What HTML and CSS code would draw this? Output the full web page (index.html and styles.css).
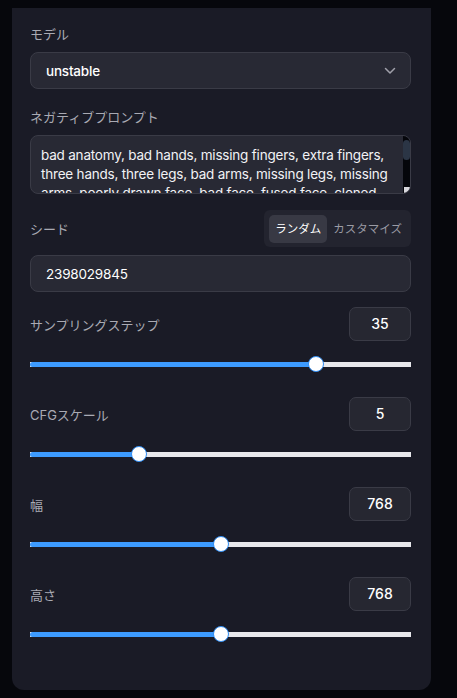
FILE: index.html
```html
<!DOCTYPE html>
<html>
<head>
    <title>生成設定</title>
<link rel="stylesheet" href="styles.css">
</head>
<body>
    <div class="panel">
        <div class="field">
            <label class="label">モデル</label>
            <div class="select">
                <span>unstable</span>
                <svg class="chevron" width="12" height="8" viewBox="0 0 12 8"><path d="M1.5 1.5 6 6l4.5-4.5" fill="none" stroke="#a0a0aa" stroke-width="1.5" stroke-linecap="round" stroke-linejoin="round"/></svg>
            </div>
        </div>

        <div class="field prompt">
            <label class="label">ネガティブプロンプト</label>
            <div class="textarea">
                <div class="textarea-text">bad anatomy, bad hands, missing fingers, extra fingers, three hands, three legs, bad arms, missing legs, missing arms, poorly drawn face, bad face, fused face, cloned face</div>
                <div class="scrollbar"><div class="scroll-thumb"></div></div>
                <div class="resize"></div>
            </div>
        </div>

        <div class="field seed">
            <div class="row">
                <label class="label">シード</label>
                <div class="toggle">
                    <span class="toggle-item active">ランダム</span>
                    <span class="toggle-item">カスタマイズ</span>
                </div>
            </div>
            <div class="input">2398029845</div>
        </div>

        <div class="slider-field">
            <div class="row">
                <label class="label">サンプリングステップ</label>
                <div class="number">35</div>
            </div>
            <div class="slider" style="--p: 75.1%"><div class="fill"></div><div class="thumb"></div></div>
        </div>

        <div class="slider-field">
            <div class="row">
                <label class="label">CFGスケール</label>
                <div class="number">5</div>
            </div>
            <div class="slider" style="--p: 28.6%"><div class="fill"></div><div class="thumb"></div></div>
        </div>

        <div class="slider-field">
            <div class="row">
                <label class="label">幅</label>
                <div class="number">768</div>
            </div>
            <div class="slider" style="--p: 50.1%"><div class="fill"></div><div class="thumb"></div></div>
        </div>

        <div class="slider-field">
            <div class="row">
                <label class="label">高さ</label>
                <div class="number">768</div>
            </div>
            <div class="slider" style="--p: 50.1%"><div class="fill"></div><div class="thumb"></div></div>
        </div>
    </div>
</body>
</html>
```

FILE: styles.css
```css
body {
    margin: 0;
    background-color: #06070c;
    font-family: "Inter", "Noto Sans CJK JP", sans-serif;
    color: #ececf1;
}
.panel {
    margin: 8px 26px 0 12px;
    height: 682px;
    box-sizing: border-box;
    padding: 16px 20px 0 18px;
    background-color: #1a1b26;
    border-radius: 0 0 12px 12px;
}
.label {
    display: block;
    font-size: 13px;
    color: #a9aab3;
}
.field > .label {
    margin-bottom: 9px;
}
.field {
    margin-bottom: 18px;
}
.field.prompt {
    margin-bottom: 16px;
}
.field.seed {
    margin-bottom: 15px;
}
.select, .input {
    display: flex;
    align-items: center;
    justify-content: space-between;
    height: 37px;
    box-sizing: border-box;
    padding: 0 14px 0 15px;
    background-color: #282934;
    border: 1px solid #3a3b46;
    border-radius: 8px;
    font-size: 13.5px;
    letter-spacing: -0.2px;
    font-weight: 500;
    color: #ffffff;
}
.input {
    font-weight: 400;
}
.textarea {
    position: relative;
    height: 59px;
    box-sizing: border-box;
    padding: 10px 14px 0 10px;
    background-color: #282934;
    border: 1px solid #3a3b46;
    border-radius: 8px;
    overflow: hidden;
}
.textarea-text {
    font-size: 13.5px;
    letter-spacing: -0.2px;
    line-height: 19px;
    color: #f2f2f5;
}
.scrollbar {
    position: absolute;
    right: 0;
    top: 0;
    bottom: 0;
    width: 7px;
    background-color: #05060b;
}
.scroll-thumb {
    height: 20px;
    margin-top: 4px;
    background-color: #2b3545;
    border-radius: 4px;
}
.resize {
    position: absolute;
    right: 0;
    bottom: 0;
    width: 6px;
    height: 6px;
    background-color: #d8d8dd;
}
.row {
    display: flex;
    align-items: center;
    justify-content: space-between;
}
.field .row {
    margin-bottom: 8px;
}
.toggle {
    display: flex;
    align-items: center;
    height: 37px;
    box-sizing: border-box;
    padding: 0 3px 0 5px;
    background-color: #23242f;
    border-radius: 6px;
}
.toggle-item {
    padding: 0 6px;
    line-height: 28px;
    font-size: 11.5px;
    color: #9a9ba4;
    border-radius: 5px;
}
.toggle-item.active {
    background-color: #383944;
    color: #ffffff;
}
.slider-field {
    margin-bottom: 25px;
}
.slider-field .row {
    margin-bottom: 15px;
}
.number {
    width: 62px;
    height: 34px;
    box-sizing: border-box;
    line-height: 32px;
    text-align: center;
    background-color: #262731;
    border: 1px solid #3a3b46;
    border-radius: 7px;
    font-size: 14px;
    font-weight: 500;
    color: #ffffff;
}
.slider {
    position: relative;
    height: 16px;
    display: flex;
    align-items: center;
    background: linear-gradient(#e8e8ec, #e8e8ec) center / 100% 5px no-repeat;
    border-radius: 3px;
}
.fill {
    width: var(--p);
    height: 5px;
    background-color: #3d9bff;
    border-radius: 3px;
}
.thumb {
    position: absolute;
    left: calc(var(--p) - 8px);
    top: 0;
    width: 16px;
    height: 16px;
    box-sizing: border-box;
    background-color: #ffffff;
    border: 1.5px solid #2f8bf0;
    border-radius: 50%;
}
```
